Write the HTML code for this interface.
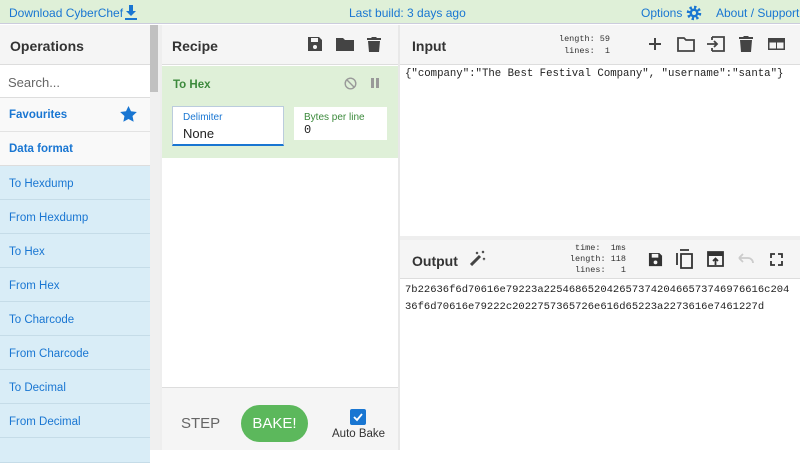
<!DOCTYPE html><html><head><style>
*{box-sizing:border-box;margin:0;padding:0}
body{width:800px;height:450px;overflow:hidden;font-family:"Liberation Sans",sans-serif;background:#fff;position:relative}
.a{position:absolute;white-space:nowrap}
.top{left:0;top:0;width:800px;height:24px;background:#dff0d8;border-bottom:1px solid #ccd;color:#1976d2;font-size:12px}
.mono{font-family:"Liberation Mono",monospace}
.item{position:absolute;left:0;width:150px;height:34px;background:#d9edf7;border-bottom:1px solid #c5dce8;font-size:11.5px;color:#1976d2;padding:12px 9px}
.h{font-weight:bold;font-size:14px;color:#333}
</style></head><body>
<div class="a top"><span class="a" style="left:9px;top:6px">Download CyberChef</span>
<svg class="a" style="left:124px;top:5px" width="14" height="15" viewBox="0 0 14 15"><path d="M5 0h4v6h3l-5 5-5-5h3z M1 13h12v2H1z" fill="#1976d2"/></svg>
<span class="a" style="left:349px;top:6px">Last build: 3 days ago</span>
<span class="a" style="left:641px;top:6px">Options</span>
<svg class="a" style="left:685px;top:5px" width="18" height="16" viewBox="0 0 16 16"><circle cx="8" cy="8" r="5.5" fill="none" stroke="#1976d2" stroke-width="3.5" stroke-dasharray="2.2 2.1"/><circle cx="8" cy="8" r="4.5" fill="#1976d2"/><circle cx="8" cy="8" r="2" fill="#dff0d8"/></svg>
<span class="a" style="left:716px;top:6px">About / Support</span></div>

<div class="a" style="left:0;top:25px;width:150px;height:40px;background:#f5f5f5;border-bottom:1px solid #ddd"><span class="a h" style="left:10px;top:13px">Operations</span></div>
<div class="a" style="left:0;top:65px;width:150px;height:33px;background:#fff;border-bottom:1px solid #ddd;font-size:13px;color:#666;padding:10px 8px">Search...</div>
<div class="a" style="left:0;top:98px;width:150px;height:34px;background:#f9f9f9;border-bottom:1px solid #e3e3e3;font-size:11.5px;color:#1976d2;font-weight:bold;padding:11px 9px">Favourites
<svg class="a" style="left:120px;top:8px" width="17" height="16" viewBox="0 0 24 23"><path d="M12 0l3.6 7.6 8.4 1-6.2 5.8 1.6 8.3L12 18.6 4.6 22.7l1.6-8.3L0 8.6l8.4-1z" fill="#1976d2"/></svg></div>
<div class="a" style="left:0;top:132px;width:150px;height:34px;background:#f9f9f9;border-bottom:1px solid #ddd;font-size:11.5px;color:#1976d2;font-weight:bold;padding:11px 9px">Data format</div>
<div class="item" style="top:166px">To Hexdump</div>
<div class="item" style="top:200px">From Hexdump</div>
<div class="item" style="top:234px">To Hex</div>
<div class="item" style="top:268px">From Hex</div>
<div class="item" style="top:302px">To Charcode</div>
<div class="item" style="top:336px">From Charcode</div>
<div class="item" style="top:370px">To Decimal</div>
<div class="item" style="top:404px">From Decimal</div>
<div class="item" style="top:438px;height:12px"></div>
<div class="a" style="left:150px;top:25px;width:10px;height:425px;background:#f0f0f0"></div>
<div class="a" style="left:150px;top:25px;width:8px;height:67px;background:#c1c1c1"></div>

<div class="a" style="left:160px;top:25px;width:2px;height:425px;background:#eee"></div>
<div class="a" style="left:398px;top:25px;width:2px;height:425px;background:#e8e8e8"></div>
<div class="a" style="left:162px;top:25px;width:236px;height:40px;background:#f5f5f5;border-bottom:1px solid #ddd"><span class="a h" style="left:10px;top:13px">Recipe</span>
<svg class="a" style="left:145px;top:11px" width="16" height="16" viewBox="0 0 16 16"><path d="M1 1h11l3 3v11H1z" fill="#444"/><rect x="4" y="2" width="7" height="4" fill="#f5f5f5"/><circle cx="8" cy="11" r="2" fill="#f5f5f5"/></svg>
<svg class="a" style="left:174px;top:12px" width="18" height="14" viewBox="0 0 18 14"><path d="M0 1h7l2 2h9v11H0z" fill="#444"/></svg>
<svg class="a" style="left:205px;top:11px" width="14" height="16" viewBox="0 0 14 16"><path d="M0 2h4l1-1h4l1 1h4v2H0z M1 5h12l-1 11H2z" fill="#444"/></svg></div>
<div class="a" style="left:162px;top:66px;width:236px;height:92px;background:#dff0d8">
<span class="a" style="left:11px;top:13px;font-size:11.5px;font-weight:bold;color:#3c8a3c">To Hex</span>
<svg class="a" style="left:182px;top:11px" width="13" height="13" viewBox="0 0 13 13"><circle cx="6.5" cy="6.5" r="5.3" fill="none" stroke="#999" stroke-width="1.4"/><path d="M2.8 2.8l7.4 7.4" stroke="#999" stroke-width="1.4"/></svg>
<div class="a" style="left:209px;top:12px;width:3px;height:10px;background:#999"></div><div class="a" style="left:214px;top:12px;width:3px;height:10px;background:#999"></div>
<div class="a" style="left:10px;top:40px;width:112px;height:40px;background:#fff;border:1px solid #bcd;border-bottom:2px solid #1976d2"><span class="a" style="left:10px;top:5px;font-size:10px;color:#1976d2">Delimiter</span><span class="a" style="left:10px;top:19px;font-size:13px;color:#222">None</span></div>
<div class="a" style="left:132px;top:41px;width:93px;height:33px;background:#fff"><span class="a" style="left:10px;top:5px;font-size:10px;color:#3c8a3c">Bytes per line</span><span class="a mono" style="left:10px;top:16px;font-size:12px;color:#222">0</span></div></div>
<div class="a" style="left:162px;top:387px;width:236px;height:63px;background:#f5f5f5;border-top:1px solid #ddd">
<span class="a" style="left:19px;top:27px;font-size:15px;color:#666">STEP</span>
<div class="a" style="left:79px;top:17px;width:67px;height:37px;border-radius:19px;background:#5cb85c;color:#fff;font-size:15px;text-align:center;line-height:37px">BAKE!</div>
<div class="a" style="left:188px;top:21px;width:16px;height:16px;background:#1976d2;border-radius:2px"><svg width="16" height="16"><path d="M4 8l3 3 5-6" stroke="#fff" stroke-width="1.8" fill="none"/></svg></div>
<span class="a" style="left:170px;top:40px;font-size:11.5px;color:#333">Auto Bake</span></div>

<div class="a" style="left:400px;top:25px;width:400px;height:40px;background:#f5f5f5;border-bottom:1px solid #ddd"><span class="a h" style="left:12px;top:13px">Input</span>
<div class="a mono" style="left:150px;top:8px;font-size:8.5px;color:#333;text-align:right;width:60px;line-height:12px">length: 59<br>lines: &nbsp;1</div>
<svg class="a" style="left:248px;top:12px" width="14" height="14"><path d="M7 1v12M1 7h12" stroke="#444" stroke-width="2"/></svg>
<svg class="a" style="left:277px;top:12px" width="18" height="15" viewBox="0 0 18 15"><path d="M1 1h6l2 2h8v11H1z" fill="none" stroke="#444" stroke-width="1.8"/></svg>
<svg class="a" style="left:306px;top:11px" width="19" height="16" viewBox="0 0 19 16"><path d="M6 1h12v14H6M1 8h10M8 5l3 3-3 3M6 1v3M6 12v3" fill="none" stroke="#444" stroke-width="1.8"/></svg>
<svg class="a" style="left:339px;top:10px" width="14" height="17" viewBox="0 0 14 17"><path d="M0 2h4l1-1h4l1 1h4v2H0z M1 5h12l-1 12H2z" fill="#444"/></svg>
<svg class="a" style="left:368px;top:13px" width="17" height="12" viewBox="0 0 17 12"><rect width="17" height="12" fill="#444"/><rect x="1.5" y="4.5" width="6.5" height="6" fill="#f5f5f5"/><rect x="9" y="4.5" width="6.5" height="6" fill="#f5f5f5"/></svg></div>
<div class="a mono" style="left:405px;top:68px;font-size:10.7px;color:#222">{"company":"The Best Festival Company", "username":"santa"}</div>

<div class="a" style="left:400px;top:236px;width:400px;height:4px;background:#eee"></div>
<div class="a" style="left:400px;top:240px;width:400px;height:39px;background:#f5f5f5;border-bottom:1px solid #ddd"><span class="a h" style="left:12px;top:13px">Output</span>
<svg class="a" style="left:70px;top:10px" width="16" height="16" viewBox="0 0 16 16"><path d="M1 15l9-9" stroke="#444" stroke-width="3"/><path d="M6 2l2 2M8 2L6 4M12 1l2 2M14 1l-2 2M13 8l2 2M15 8l-2 2" stroke="#444" stroke-width="1"/></svg>
<div class="a mono" style="left:146px;top:3px;font-size:8.5px;color:#333;text-align:right;width:80px;line-height:11px">time: &nbsp;1ms<br>length: 118<br>lines: &nbsp;&nbsp;1</div>
<svg class="a" style="left:248px;top:12px" width="15" height="15" viewBox="0 0 16 16"><path d="M1 1h11l3 3v11H1z" fill="#333"/><rect x="4" y="2" width="7" height="4" fill="#f5f5f5"/><circle cx="8" cy="11" r="2" fill="#f5f5f5"/></svg>
<svg class="a" style="left:276px;top:9px" width="18" height="20" viewBox="0 0 18 20"><path d="M4 1h9M1 4v12M5 5h11v14H5z" fill="none" stroke="#333" stroke-width="1.8"/></svg>
<svg class="a" style="left:307px;top:11px" width="17" height="16" viewBox="0 0 17 16"><path d="M1 1h15v14H1z" fill="none" stroke="#333" stroke-width="1.8"/><rect x="1" y="1" width="15" height="4" fill="#333"/><path d="M8.5 14V8M6 10l2.5-2.5L11 10" stroke="#333" stroke-width="1.8" fill="none"/></svg>
<svg class="a" style="left:337px;top:13px" width="18" height="10"><path d="M2 5l4-4M2 5l4 4M2 5h9a5 5 0 0 1 5 5" stroke="#ccc" stroke-width="1.8" fill="none"/></svg>
<svg class="a" style="left:370px;top:13px" width="13" height="13"><path d="M1 5V1h4M8 1h4v4M12 8v4H8M5 12H1V8" stroke="#333" stroke-width="1.8" fill="none"/></svg></div>
<div class="a mono" style="left:405px;top:282px;font-size:10.5px;color:#222;line-height:17px">7b22636f6d70616e79223a22546865204265737420466573746976616c204<br>36f6d70616e79222c2022757365726e616d65223a2273616e7461227d</div>
</body></html>
